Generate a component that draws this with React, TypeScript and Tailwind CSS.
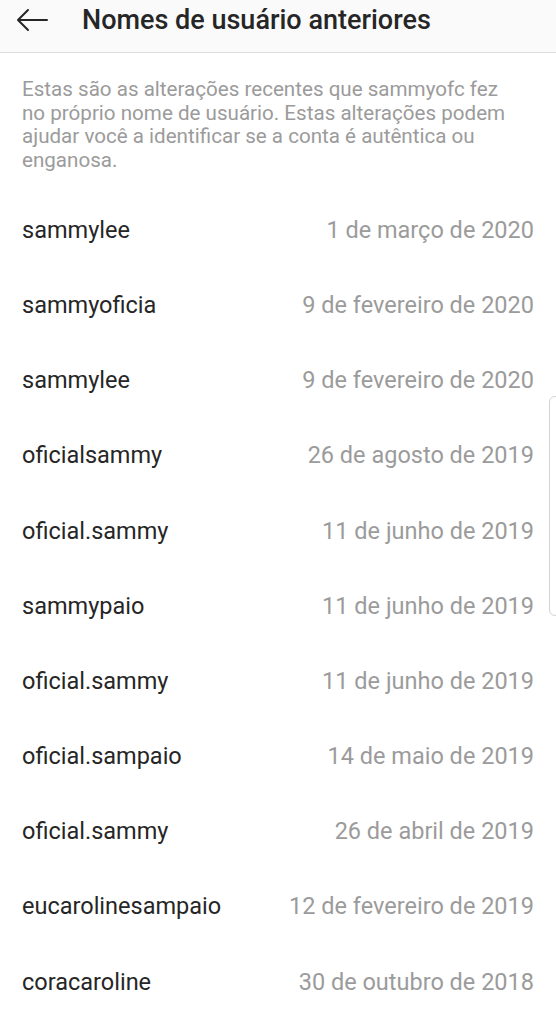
import React from "react";

const rows: [string, string][] = [
  ["sammylee", "1 de março de 2020"],
  ["sammyoficia", "9 de fevereiro de 2020"],
  ["sammylee", "9 de fevereiro de 2020"],
  ["oficialsammy", "26 de agosto de 2019"],
  ["oficial.sammy", "11 de junho de 2019"],
  ["sammypaio", "11 de junho de 2019"],
  ["oficial.sammy", "11 de junho de 2019"],
  ["oficial.sampaio", "14 de maio de 2019"],
  ["oficial.sammy", "26 de abril de 2019"],
  ["eucarolinesampaio", "12 de fevereiro de 2019"],
  ["coracaroline", "30 de outubro de 2018"],
];

export default function App() {
  return (
    <div
      className="relative w-[556px] h-[1024px] overflow-hidden bg-white"
      style={{ fontFamily: "Roboto, 'Noto Sans', Arial, sans-serif" }}
    >
      <div className="h-[53px] bg-[#fafafa] border-b border-[#dedede] flex items-start pt-[5px]">
        <div className="w-[82px] h-[30px] flex items-center pl-[16px]">
          <svg width="32" height="24" viewBox="0 0 32 24" fill="none">
            <path d="M31 12H2M12 2L2 12l10 10" stroke="#262626" strokeWidth="2" strokeLinecap="round" strokeLinejoin="round" />
          </svg>
        </div>
        <div className="h-[30px] flex items-center text-[27px] font-medium text-[#262626] leading-none">
          Nomes de usuário anteriores
        </div>
      </div>
      <p className="pl-[22px] pr-[40px] pt-[25px] text-[20.6px] leading-[23.7px] text-[#9b9b9b]">
        Estas são as alterações recentes que sammyofc fez no próprio nome de usuário. Estas alterações podem ajudar você a identificar se a conta é autêntica ou enganosa.
      </p>
      <div className="mt-[20px] flex flex-col">
        {rows.map(([name, date], i) => (
          <div key={i} className="h-[75.2px] flex items-center justify-between pl-[22px] pr-[22px] text-[23.5px]">
            <span className="text-[#262626]">{name}</span>
            <span className="text-[#9b9b9b]">{date}</span>
          </div>
        ))}
      </div>
      <div className="absolute left-[549px] top-[396px] w-[12px] h-[220px] rounded-[6px] border border-[#d4d4d4]" />
    </div>
  );
}
